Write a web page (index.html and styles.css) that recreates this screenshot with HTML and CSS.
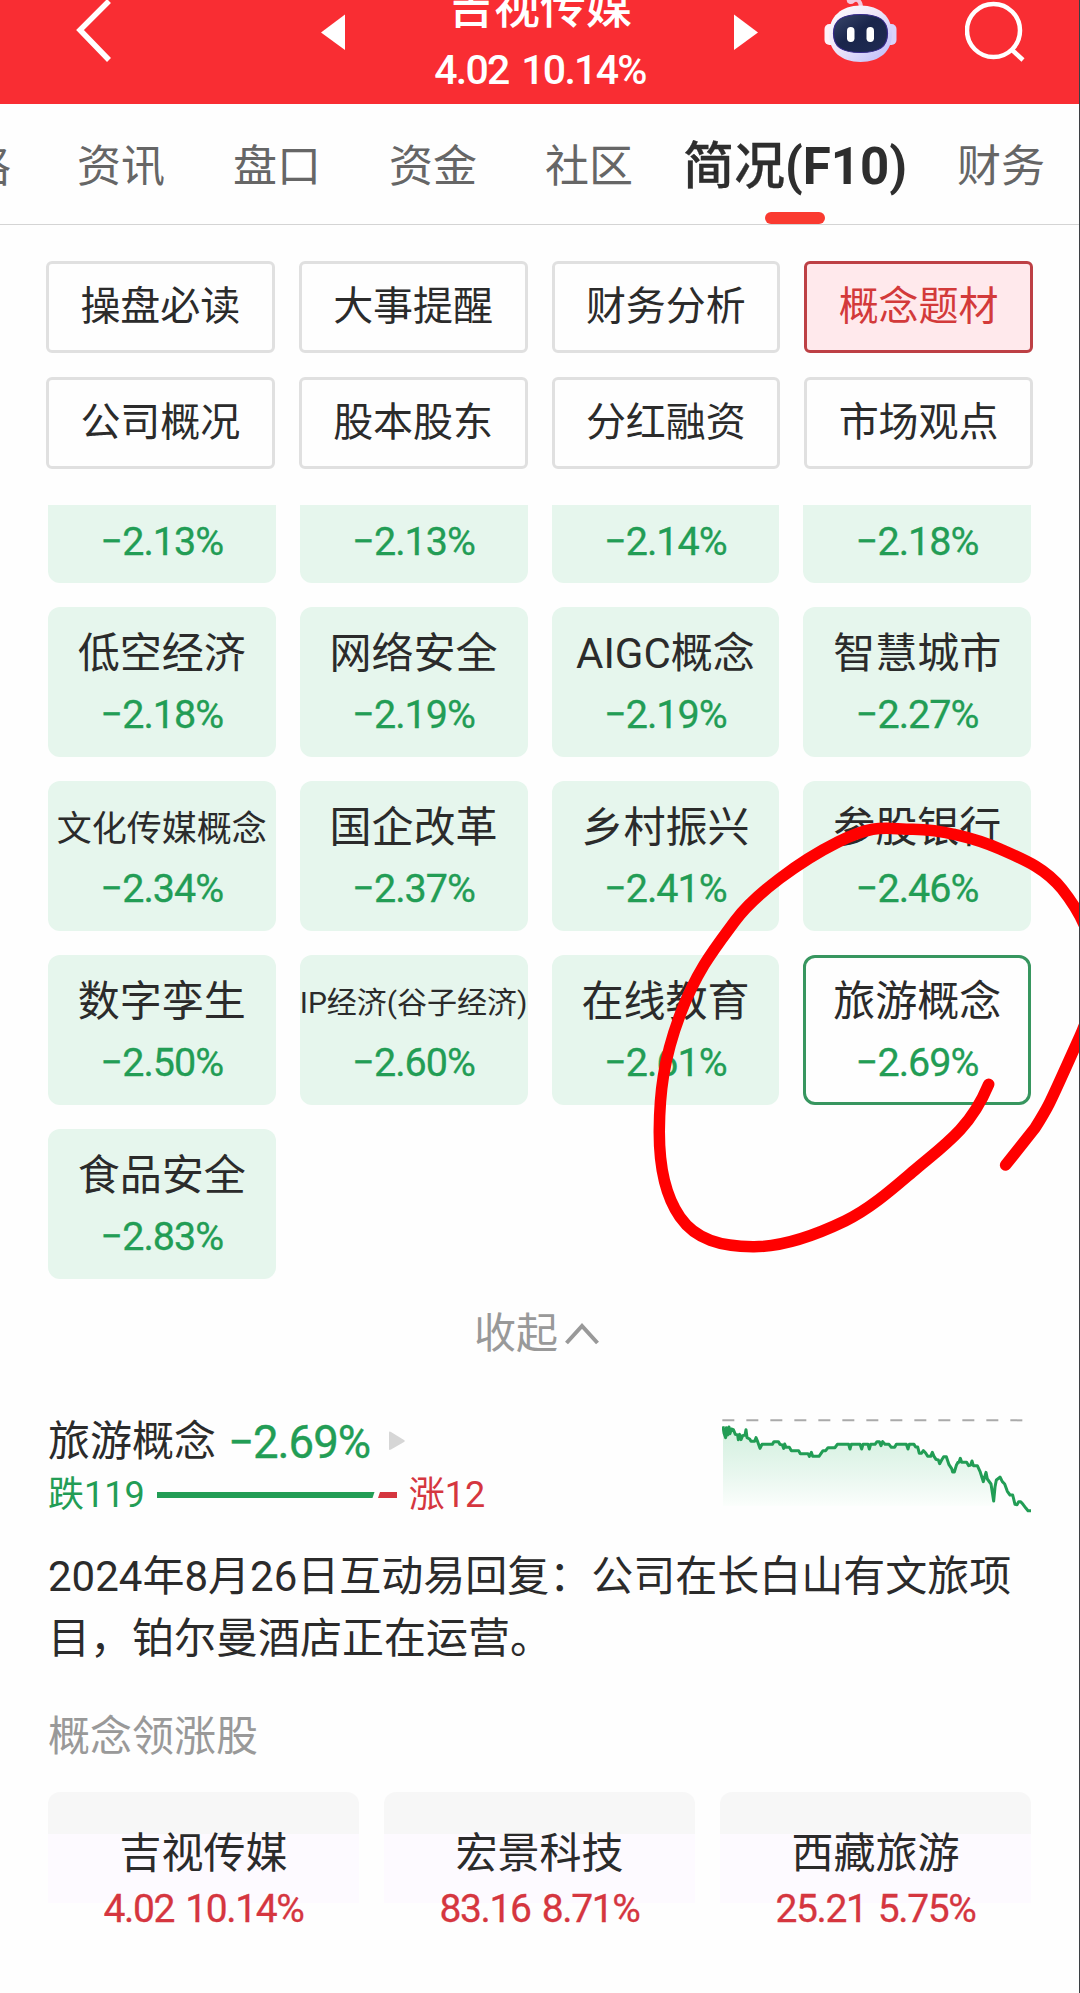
FILE: index.html
```html
<!DOCTYPE html>
<html lang="zh-CN">

    <head>
        <!-- Meta Data -->
        <meta charset="UTF-8">

        <!-- Title -->
        <title>吉视传媒</title>

        <!-- Style -->
        <link rel="stylesheet" href="styles.css">
    </head>

    <body>
        <!-- Header -->
        <header class="header">
            <svg class="back" width="36" height="64" viewBox="0 0 36 64"><path d="M33 1L4 30l29 30" fill="none" stroke="#fff" stroke-width="5.500"/></svg>
            <svg class="prev" width="24" height="64" viewBox="0 0 24 64"><path d="M0 32.5L24 14.5V50z" fill="#fff"/></svg>
            <div class="stock">
                <div class="stock-name">吉视传媒</div>
                <div class="stock-price">4.02 10.14%</div>
            </div>
            <svg class="next" width="24" height="64" viewBox="0 0 24 64"><path d="M24 32.5L0 14.5V50z" fill="#fff"/></svg>
            <svg class="robot" width="73" height="64" viewBox="0 0 73 64">
                <defs>
                    <linearGradient id="shell" x1="0" y1="0" x2="1" y2="1">
                        <stop offset="0" stop-color="#fff"/>
                        <stop offset=".45" stop-color="#eee6f8"/>
                        <stop offset="1" stop-color="#b9b9fb"/>
                    </linearGradient>
                    <linearGradient id="visor" x1="0" y1="0" x2="1" y2="1">
                        <stop offset="0" stop-color="#39476a"/>
                        <stop offset=".45" stop-color="#19254b"/>
                        <stop offset="1" stop-color="#202b52"/>
                    </linearGradient>
                </defs>
                <path d="M37 8c0-7-4-10-8-7-2 2-5 1-4-2" fill="none" stroke="#f3c6dc" stroke-width="4" stroke-linecap="round"/>
                <rect x="0.500" y="24" width="12" height="21" rx="5" fill="#fff2f8"/>
                <rect x="60" y="24" width="12.500" height="21" rx="5" fill="#d9d2fa"/>
                <path d="M36.500 5.500C56 5.500 68 17 68 34S56 62 36.500 62 5 51 5 34 17 5.500 36.500 5.500z" fill="url(#shell)"/>
                <path d="M36.500 14.500c19 0 27 6 27 19s-8 19-27 19-27-6-27-19 8-19 27-19z" fill="url(#visor)" stroke="#372a8c" stroke-width="1.200"/>
                <rect x="23" y="27" width="7.500" height="15" rx="3.700" fill="#fff"/>
                <rect x="42.500" y="27" width="7.500" height="15" rx="3.700" fill="#fff"/>
            </svg>
            <svg class="search" width="60" height="64" viewBox="0 0 60 64"><g fill="none" stroke="#fff" stroke-width="4.500"><circle cx="28.500" cy="30.500" r="26.500"/><path d="M46 49l12 11"/></g></svg>
        </header>

        <!-- Tabs -->
        <nav class="tabs">
            <span class="tab cut">价格</span>
            <span class="tab">资讯</span>
            <span class="tab">盘口</span>
            <span class="tab">资金</span>
            <span class="tab">社区</span>
            <span class="tab active"><span><span class="active-name">简况</span>(F10)</span></span>
            <span class="tab">财务</span>
        </nav>

        <!-- Sections -->
        <div class="sections">
            <div class="section">操盘必读</div>
            <div class="section">大事提醒</div>
            <div class="section">财务分析</div>
            <div class="section selected">概念题材</div>
            <div class="section">公司概况</div>
            <div class="section">股本股东</div>
            <div class="section">分红融资</div>
            <div class="section">市场观点</div>
        </div>

        <!-- Concepts -->
        <div class="concepts">
            <div class="concept clipped"><div class="rate">−2.13%</div></div>
            <div class="concept clipped"><div class="rate">−2.13%</div></div>
            <div class="concept clipped"><div class="rate">−2.14%</div></div>
            <div class="concept clipped"><div class="rate">−2.18%</div></div>
            <div class="concept"><div class="name">低空经济</div><div class="rate">−2.18%</div></div>
            <div class="concept"><div class="name">网络安全</div><div class="rate">−2.19%</div></div>
            <div class="concept"><div class="name">AIGC概念</div><div class="rate">−2.19%</div></div>
            <div class="concept"><div class="name">智慧城市</div><div class="rate">−2.27%</div></div>
            <div class="concept"><div class="name medium">文化传媒概念</div><div class="rate">−2.34%</div></div>
            <div class="concept"><div class="name">国企改革</div><div class="rate">−2.37%</div></div>
            <div class="concept"><div class="name">乡村振兴</div><div class="rate">−2.41%</div></div>
            <div class="concept"><div class="name">参股银行</div><div class="rate">−2.46%</div></div>
            <div class="concept"><div class="name">数字孪生</div><div class="rate">−2.50%</div></div>
            <div class="concept"><div class="name small">IP经济(谷子经济)</div><div class="rate">−2.60%</div></div>
            <div class="concept"><div class="name">在线教育</div><div class="rate">−2.61%</div></div>
            <div class="concept current"><div class="name">旅游概念</div><div class="rate">−2.69%</div></div>
            <div class="concept"><div class="name">食品安全</div><div class="rate">−2.83%</div></div>
        </div>

        <div class="collapse">
            <span>收起</span>
            <svg width="34" height="22" viewBox="0 0 34 22"><path d="M1.500 20L17 3l15.500 17" fill="none" stroke="#999" stroke-width="4"/></svg>
        </div>

        <!-- Detail -->
        <div class="detail">
            <div class="summary">
                <div class="summary-top">
                    <span class="summary-name">旅游概念</span>
                    <span class="summary-rate">−2.69%</span>
                    <svg width="16" height="20" viewBox="0 0 16 20"><path d="M0 1.500Q0 0 2 1l13 8q1.500 1 0 2L2 18.500Q0 19.500 0 18z" fill="#d6d6d6"/></svg>
                </div>
                <div class="summary-bar">
                    <span class="fall">跌119</span>
                    <svg width="240" height="6" viewBox="0 0 240 6"><path d="M0 0h217.500l-2 6H0z" fill="#229d55"/><path d="M223 0h17v6h-19z" fill="#d5363f"/></svg>
                    <span class="rise">涨12</span>
                </div>
            </div>
            <svg class="chart" width="310" height="97" viewBox="66 80 930 291">
                <defs>
                    <linearGradient id="fade" x1="0" y1="0" x2="0" y2="1">
                        <stop offset="0" stop-color="#d3f0df"/>
                        <stop offset=".6" stop-color="#e9f7ef"/>
                        <stop offset="1" stop-color="#fbfefc"/>
                    </linearGradient>
                </defs>
                <path d="M67 90H968" fill="none" stroke="#aaa" stroke-width="6" stroke-dasharray="36 36"/>
                <path d="M69 118H100L112 134H138L152 153H172L180 162H215L230 154L250 170L275 181L300 190L328 198H357L370 181L410 162H525L545 154L580 171L590 162H640L660 185L700 196L720 210L738 198L760 245L772 216L830 225L850 270L860 250L880 300L882 347H69z" fill="url(#fade)"/>
                <path d="M69 108L72 128L77 142L79 112L83 134L87 110L90 130L94 116L100 118L106 132L113 134L115 148L119 132L123 148L128 136L135 134L138 118L141 142L149 146L153 153H164L168 142L173 154L180 174L186 162H217L222 154H235L240 162L247 164L251 174L254 161L258 171H268L274 181H296L301 190H324L328 198L334 186L338 198H357L369 181H377L384 172H405L412 162H446L450 176L454 162H480L485 176L489 162H504L508 176L512 162H525L531 154H538L543 166L548 154L555 162H567L574 171H584L589 162H619L624 176L628 162H642L647 170H653L658 189H664L670 181L677 188L683 198H692L697 186L702 198L708 207L715 209L719 220L725 209L731 199H739L747 223L755 235L758 245H763L769 225L774 216H777L781 204L785 216H800L806 226L812 224L816 212L820 226H832L840 243L850 274L858 246L862 266L873 281L881 332L885 290L889 269L896 264L900 260L907 274L914 281L922 303L930 314H938L945 342L951 343L956 334H962L969 342L978 354L984 361H993" fill="none" stroke="#229d55" stroke-width="9" stroke-linejoin="round"/>
            </svg>
        </div>

        <p class="reply">2024年8月26日互动易回复：公司在长白山有文旅项目，铂尔曼酒店正在运营。</p>

        <!-- Leading stocks -->
        <div class="leaders-title">概念领涨股</div>
        <div class="leaders">
            <div class="leader"><div class="name">吉视传媒</div><div class="leader-rate">4.02 10.14%</div></div>
            <div class="leader"><div class="name">宏景科技</div><div class="leader-rate">83.16 8.71%</div></div>
            <div class="leader"><div class="name">西藏旅游</div><div class="leader-rate">25.21 5.75%</div></div>
        </div>

        <!-- Hand drawn mark -->
        <svg class="mark" width="1080" height="1993" viewBox="0 0 1080 1993">
            <path d="M988.700 1084.300C983 1098 974 1115 960 1130S935 1153 916 1169S872 1208 845 1221S785 1247 753 1246.700S696 1240 680 1217S659 1165 659.300 1130S663 1060 680 1015S715 948 735 921S800 861 838 842S885 829 913 829.300S975 838 1000 849S1045 868 1062 889C1085 918 1112 965 1080 1036S1050 1104 1035 1128L1005.600 1165" fill="none" stroke="#f00" stroke-width="11.500" stroke-linecap="round"/>
        </svg>
    </body>

</html>
```

FILE: styles.css
```css
* {
    box-sizing: border-box;
}

body {
    position: relative;
    width: 1080px;
    height: 1993px;
    margin: 0;
    overflow: hidden;
    color: #2b2b2b;
    background-color: #fefefe;
    border-right: 1px solid #3c3f43;
    font-family: Roboto, "Noto Sans CJK SC", sans-serif;
}

svg {
    display: block;
    flex: none;
}

.header {
    display: flex;
    align-items: flex-start;
    height: 104px;
    margin-right: -1px;
    overflow: hidden;
    color: #fff;
    background: #f92d33;
    border-right: 1px solid #7c1a1e;
}

.back {
    margin-left: 76px;
}

.prev {
    margin-left: 209px;
}

.stock {
    width: 260px;
    margin-left: 65px;
    text-align: center;
    white-space: nowrap;
}

.stock-name {
    margin-top: -20px;
    font-size: 46px;
    font-weight: 500;
    line-height: 54px;
}

.stock-price {
    margin-top: 12px;
    font-size: 41px;
    font-weight: 500;
    line-height: 48px;
    letter-spacing: -1.7px;
    word-spacing: 4px;
}

.next {
    margin-left: 64px;
}

.robot {
    margin-left: 66px;
}

.search {
    margin-left: 68px;
}

/* Tabs */
.tabs {
    display: flex;
    gap: 68px;
    height: 121px;
    border-bottom: 1px solid #d4d4d4;
    color: #666;
    font-size: 44px;
    line-height: 126px;
    white-space: nowrap;
}

.tab {
    flex: none;
}

.cut {
    margin: 0 -2px 0 -77px;
}

.active {
    display: flex;
    flex-direction: column;
    align-items: center;
    width: 222px;
    margin: 0 -17px;
    color: #2e2e2e;
    font-size: 51px;
    font-weight: bold;
}

.active-name {
    font-weight: 500;
    -webkit-text-stroke: 0.3px #2e2e2e;
}

.active::after {
    content: "";
    width: 60px;
    height: 12px;
    margin-top: -18px;
    border-radius: 6px;
    background: #fa3a30;
}

/* Sections */
.sections {
    display: grid;
    grid-template-columns: repeat(4, 1fr);
    gap: 24px;
    width: 987px;
    margin: 36px 0 0 46px;
}

.section {
    height: 92px;
    border: 3px solid #e0e0e0;
    border-radius: 6px;
    font-size: 40px;
    line-height: 86px;
    text-align: center;
}

.selected {
    color: #d33a3a;
    background: #ffe9ec;
    border-color: #bd4045;
}

/* Concepts */
.concepts {
    display: grid;
    grid-template-columns: repeat(4, 1fr);
    gap: 24px;
    width: 983px;
    margin: 36px 0 0 48px;
}

.concept {
    height: 150px;
    padding-top: 20px;
    border-radius: 12px;
    background: #e6f6ed;
    text-align: center;
    white-space: nowrap;
}

.clipped {
    height: 78px;
    padding-top: 3px;
    border-radius: 0 0 12px 12px;
}

.current {
    padding-top: 17px;
    border: 3px solid #37965f;
    background: none;
}

.name {
    font-size: 42px;
    line-height: 54px;
}

.medium {
    padding-top: 3px;
    font-size: 35px;
    line-height: 51px;
}

.small {
    padding-top: 1px;
    font-size: 30px;
    line-height: 53px;
}

.rate {
    margin-top: 9px;
    color: #229d55;
    font-size: 39.5px;
    line-height: 50px;
    letter-spacing: -1px;
    -webkit-text-stroke: 0.3px #229d55;
}

.collapse {
    display: flex;
    align-items: center;
    gap: 7px;
    height: 60px;
    margin: 25px 0 0 474px;
    color: #999;
    font-size: 42px;
    line-height: 60px;
}

/* Detail */
.detail {
    display: flex;
    justify-content: space-between;
    width: 984px;
    margin: 52px 0 0 48px;
}

.summary-top {
    display: flex;
    align-items: center;
    height: 50px;
}

.summary-name {
    margin-top: -7px;
    font-size: 42px;
}

.summary-rate {
    margin: 2px 19px 0 12px;
    color: #229d55;
    font-size: 45.5px;
    letter-spacing: -1px;
    -webkit-text-stroke: 0.4px #229d55;
}

.summary-bar {
    display: flex;
    align-items: center;
    gap: 12px;
    height: 60px;
    margin-top: -1px;
    font-size: 36px;
}

.fall,
.rise {
    margin-top: -8px;
}

.fall {
    color: #229d55;
}

.rise {
    color: #d5363f;
}

.chart {
    margin-top: 1px;
}

.reply {
    width: 990px;
    margin: 21px 0 0 48px;
    font-size: 42px;
    line-height: 62px;
}

.leaders-title {
    margin: 37px 0 0 48px;
    color: #999;
    font-size: 42px;
    line-height: 60px;
}

.leaders {
    display: grid;
    grid-template-columns: repeat(3, 1fr);
    gap: 25px;
    width: 983px;
    margin: 25px 0 0 48px;
}

.leader {
    height: 150px;
    padding-top: 35px;
    border-radius: 12px;
    background: linear-gradient(#f7f7f7 42px, #fdfaff 42px, #fdfaff 111px, #fefefe 111px);
    text-align: center;
    white-space: nowrap;
}

.leader-rate {
    margin-top: 3px;
    color: #d5363f;
    font-size: 39px;
    line-height: 50px;
    letter-spacing: -1.4px;
    word-spacing: 3px;
    -webkit-text-stroke: 0.3px #d5363f;
}

.mark {
    position: absolute;
    top: 0;
    left: 0;
}
```
